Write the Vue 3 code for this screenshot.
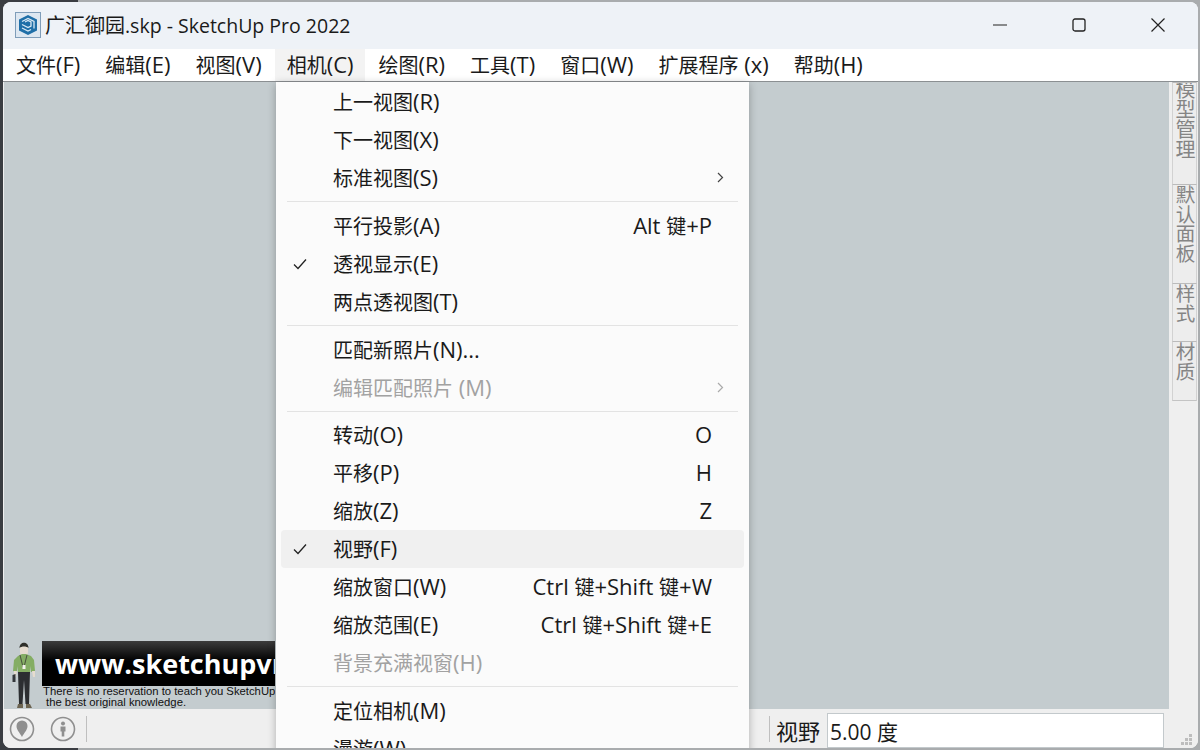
<template>
  <div class="desk">
    <div class="win">
      <div class="titlebar">
        <svg class="logo" width="26" height="26" viewBox="0 0 26 26">
          <rect x="0.5" y="0.5" width="25" height="25" fill="#dde7f1" stroke="#7f9db9" />
          <path d="M13 3l9 4.500v11L13 23l-9-4.500v-11z" fill="#1f6fa8" />
          <path d="M7 9.500L13 6.500l6 3v7M7 12.500l6 3 3-1.500v-4l-3-1.500-3 1.500M7 16l6 3 3-1.500" fill="none" stroke="#d8e8f4" stroke-width="1.300" />
        </svg>
        <span class="title"><span v-for="p in parts(title)" :key="p" :class="{ lat: isLat(p) }">{{ p }}</span></span>
        <div class="winbtns">
          <svg width="14" height="14" viewBox="0 0 14 14"><path d="M0 7h14" stroke="#222" stroke-width="1.2" /></svg>
          <svg width="14" height="14" viewBox="0 0 14 14"><rect x="1" y="1" width="12" height="12" rx="2" fill="none" stroke="#222" stroke-width="1.3" /></svg>
          <svg width="14" height="14" viewBox="0 0 14 14"><path d="M0.5 0.5l13 13M13.5 0.5l-13 13" stroke="#222" stroke-width="1.2" /></svg>
        </div>
      </div>

      <div class="menubar">
        <span v-for="m in topMenu" :key="m" class="topitem" :class="{ open: m === '相机(C)' }">
          <span v-for="p in parts(m)" :key="p" :class="{ lat: isLat(p) }">{{ p }}</span>
        </span>
      </div>

      <div class="middle">
        <div class="canvas">
          <div class="ad">
            <svg class="person" width="24" height="67" viewBox="0 0 24 67">
              <path d="M8 5a4 4 0 0 1 8 0v5a4 4 0 0 1-8 0z" fill="#e6dccf" />
              <path d="M7.500 6c0-7 9-7 9 0-2-2-7-2-9 0z" fill="#2f2f2a" />
              <path d="M6 14l4-2h4l5 2 3 4 1 11-4 1-1-6v6H6v-6l-1 6-4-1 1-11z" fill="#84ad63" />
              <path d="M8 13l3 12M15 13l-3 12" fill="none" stroke="#3a3a34" stroke-width="0.8" />
              <rect x="10.500" y="23" width="3" height="4" fill="#f2f2ea" />
              <path d="M2 29h3l-1 6H2z" fill="#e6dccf" />
              <path d="M20 29h3v6h-2z" fill="#e6dccf" />
              <path d="M0.500 33l3-1v8h-3z" fill="#33363a" />
              <path d="M6 30h12l-1 32h-3.500l-1.500-24-1.500 24H7z" fill="#2c2e31" />
              <path d="M6 62h5v4H5zM14 62h4l2 4h-6z" fill="#6b6350" />
            </svg>
            <div class="adtext">
              <div class="banner">www.sketchupvr</div>
              <div class="small">There is no reservation to teach you SketchUp</div>
              <div class="small second">the best original knowledge.</div>
            </div>
          </div>
        </div>
        <div class="tabs">
          <div class="tab tab1">模型管理</div>
          <div class="tab tab2">默认面板</div>
          <div class="tab tab3">样式</div>
          <div class="tab tab4">材质</div>
        </div>
      </div>

      <div class="statusbar">
        <svg width="26" height="26" viewBox="0 0 26 26">
          <circle cx="13" cy="13" r="11.500" fill="none" stroke="#8f8f8f" stroke-width="1.6" />
          <path d="M13 21c-2-4-5.500-7-5.500-11a5.500 5.500 0 0 1 11 0c0 4-3.500 7-5.500 11z" fill="#8f8f8f" />
        </svg>
        <svg class="second-icon" width="26" height="26" viewBox="0 0 26 26">
          <circle cx="13" cy="13" r="11.500" fill="none" stroke="#8f8f8f" stroke-width="1.6" />
          <circle cx="13" cy="7.500" r="2" fill="#8f8f8f" />
          <path d="M10.500 10.500h5v5h-1.200v5h-2.600v-5h-1.200z" fill="#8f8f8f" />
        </svg>
        <div class="vsep"></div>
        <div class="statusright">
          <div class="vsep"></div>
          <span class="vcb-label">视野</span>
          <div class="vcb">5.00 度</div>
          <svg class="grip" width="12" height="14" viewBox="0 0 12 14">
            <path d="M9 1h3v3H9zM5 5h3v3H5zM9 5h3v3H9zM1 9h3v3H1zM5 9h3v3H5zM9 9h3v3H9z" fill="#bdbdbd" />
          </svg>
        </div>
      </div>

      <div class="menu">
        <template v-for="(it, i) in items" :key="i">
          <div v-if="it.sep" class="sep" :class="{ tight: it.tight }"></div>
          <div v-else class="row" :class="{ hover: it.hover, off: it.off }">
            <svg v-if="it.check" class="check" width="14" height="12" viewBox="0 0 14 12">
              <path d="M1 6.500l4 4 8-9" fill="none" stroke="#222" stroke-width="1.300" />
            </svg>
            <span class="label"><span v-for="p in parts(it.label)" :key="p" :class="{ lat: isLat(p) }">{{ p }}</span></span>
            <span v-if="it.key" class="key"><span v-for="(p, n) in parts(it.key)" :key="n" :class="{ lat: isLat(p) }">{{ p }}</span></span>
            <svg v-if="it.sub" class="arrow" width="7" height="11" viewBox="0 0 7 11">
              <path d="M1 1l4.500 4.500L1 10" fill="none" :stroke="it.off ? '#aaa' : '#444'" stroke-width="1.200" />
            </svg>
          </div>
        </template>
      </div>
    </div>
  </div>
</template>

<script setup>
const title = '广汇御园.skp - SketchUp Pro 2022'
const topMenu = ['文件(F)', '编辑(E)', '视图(V)', '相机(C)', '绘图(R)', '工具(T)', '窗口(W)', '扩展程序 (x)', '帮助(H)']

const items = [
  { label: '上一视图(R)' },
  { label: '下一视图(X)' },
  { label: '标准视图(S)', sub: true },
  { sep: true },
  { label: '平行投影(A)', key: 'Alt 键+P' },
  { label: '透视显示(E)', check: true },
  { label: '两点透视图(T)' },
  { sep: true },
  { label: '匹配新照片(N)...' },
  { label: '编辑匹配照片 (M)', off: true, sub: true },
  { sep: true, tight: true },
  { label: '转动(O)', key: 'O' },
  { label: '平移(P)', key: 'H' },
  { label: '缩放(Z)', key: 'Z' },
  { label: '视野(F)', check: true, hover: true },
  { label: '缩放窗口(W)', key: 'Ctrl 键+Shift 键+W' },
  { label: '缩放范围(E)', key: 'Ctrl 键+Shift 键+E' },
  { label: '背景充满视窗(H)', off: true },
  { sep: true },
  { label: '定位相机(M)' },
  { label: '漫游(W)' }
]

// latin runs are set a bit bigger than the chinese ones
const parts = (text) => text.match(/[\u4e00-\u9fff]+|[^\u4e00-\u9fff]+/g)
const isLat = (s) => !/[\u4e00-\u9fff]/.test(s)
</script>

<style scoped>
.desk {
  height: 750px;
  overflow: hidden;
  background: linear-gradient(90deg, #3a3d42 0, #3a3d42 78px, #a9acae 78px);
  padding: 2px 2px 2px 3px;
  box-sizing: border-box;
  font-family: "Open Sans", "Noto Sans CJK SC", sans-serif;
  color: #1a1a1a;
}

.win {
  position: relative;
  height: 100%;
  display: flex;
  flex-direction: column;
  border-radius: 8px;
  overflow: hidden;
  background: #fff;
}

.titlebar {
  height: 47px;
  flex: none;
  display: flex;
  align-items: center;
  background: #eef2f7;
  padding: 0 0 2px 12px;
  box-sizing: border-box;
}

.logo {
  margin-right: 4px;
}

.title {
  font-size: 20px;
}

.title .lat {
  font-size: 19.500px;
}

.winbtns {
  margin-left: auto;
  display: flex;
  align-items: center;
  gap: 65px;
  padding-right: 33px;
}

.menubar {
  height: 33px;
  flex: none;
  display: flex;
  background: #fff;
  border-bottom: 1px solid #8b8f92;
  padding-left: 1px;
  box-sizing: border-box;
}

.topitem {
  font-size: 20px;
  line-height: 30px;
  padding: 0 12px;
  margin-right: 1px;
  white-space: nowrap;
}

.topitem .lat,
.row .lat {
  font-size: 22px;
}

.topitem.open {
  background: #f3f3f3;
}

.middle {
  flex: 1;
  min-height: 0;
  display: flex;
  background: #efefef;
}

.canvas {
  flex: 1;
  position: relative;
  background: #c4cccf;
  margin-left: 1px;
}

.ad {
  position: absolute;
  left: 8px;
  bottom: 0;
  display: flex;
  gap: 6px;
}

.person {
  margin-top: 1px;
}

.adtext {
  width: 233px;
  height: 68px;
  overflow: hidden;
}

.banner {
  height: 45px;
  line-height: 45px;
  background: linear-gradient(#3c3c3c, #000 45%);
  color: #fff;
  font-size: 27px;
  font-weight: 700;
  padding-left: 13px;
  white-space: nowrap;
}

.small {
  font-family: "Liberation Sans", sans-serif;
  font-size: 11.300px;
  line-height: 11px;
  color: #111;
  white-space: nowrap;
  margin-left: 1px;
}

.second {
  margin-left: 4px;
}

.tabs {
  width: 25px;
  flex: none;
  margin: 0 1px 0 3px;
  display: flex;
  flex-direction: column;
}

.tab {
  writing-mode: vertical-rl;
  font-size: 19.500px;
  color: #858585;
  background: #ededed;
  border: 1px solid #d2d2d2;
  border-top-color: #bbb;
  border-bottom: none;
  box-sizing: border-box;
  line-height: 23px;
  overflow: hidden;
  white-space: nowrap;
}

.tab1 {
  height: 102px;
  font-size: 20px;
  text-indent: -4px;
}

.tab2 {
  height: 99px;
}

.tab3 {
  height: 58px;
}

.tab4 {
  height: 60px;
  border-bottom: 1px solid #c4c4c4;
}

.statusbar {
  height: 39px;
  flex: none;
  display: flex;
  align-items: center;
  background: #efefef;
  padding-left: 6px;
}

.second-icon {
  margin-left: 15px;
}

.vsep {
  width: 1px;
  height: 26px;
  background: #bfbfbf;
  margin-left: 10px;
}

.statusright {
  margin-left: auto;
  display: flex;
  align-items: center;
}

.vcb-label {
  font-size: 22px;
  margin: 3px 7px 0 6px;
}

.vcb {
  width: 337px;
  height: 35px;
  margin-top: 3px;
  line-height: 36px;
  box-sizing: border-box;
  border: 1px solid #c3c9cc;
  background: #fff;
  font-size: 21px;
  padding-left: 2px;
}

.grip {
  margin: 22px 6px 0 16px;
}

.menu {
  position: absolute;
  left: 273px;
  top: 80px;
  width: 473px;
  padding: 1px 5px;
  box-sizing: border-box;
  background: #fbfbfb;
  box-shadow: 0 2px 8px rgba(0, 0, 0, 0.28);
  border-radius: 0 0 6px 6px;
}

.row {
  position: relative;
  height: 38px;
  line-height: 30px;
  display: flex;
  align-items: center;
  padding: 0 32px 1px 52px;
  box-sizing: border-box;
  border-radius: 4px;
  font-size: 20px;
  white-space: nowrap;
}

.row.hover {
  background: #f0f0f0;
}

.row.off {
  color: #a2a2a2;
}

.check {
  position: absolute;
  left: 12px;
  top: 13px;
}

.key {
  margin-left: auto;
}

.arrow {
  position: absolute;
  right: 20px;
  top: 13px;
}

.sep {
  height: 1px;
  background: #e3e3e3;
  margin: 4px 6px 5px;
}

.sep.tight {
  margin-bottom: 4px;
}
</style>
